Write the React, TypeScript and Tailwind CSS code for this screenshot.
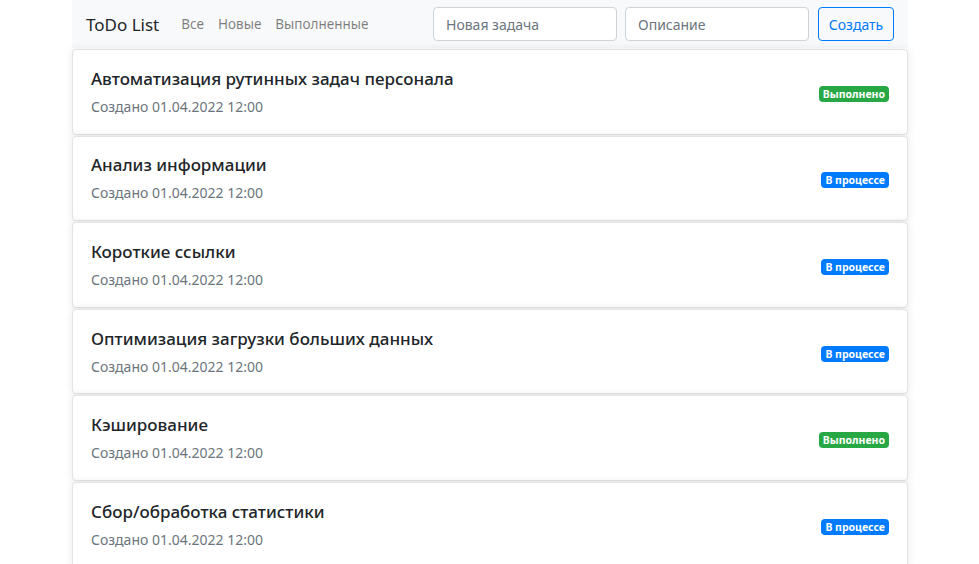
const tasks = [
  { title: "Автоматизация рутинных задач персонала", done: true },
  { title: "Анализ информации", done: false },
  { title: "Короткие ссылки", done: false },
  { title: "Оптимизация загрузки больших данных", done: false },
  { title: "Кэширование", done: true },
  { title: "Сбор/обработка статистики", done: false },
];

function StatusBadge({ done }: { done: boolean }) {
  return done ? (
    <span className="mt-[4px] rounded-[4px] bg-[#28a745] px-[4px] py-[3px] text-[10.5px] font-bold leading-[10px] text-white">
      Выполнено
    </span>
  ) : (
    <span className="mt-[4px] rounded-[4px] bg-[#007bff] px-[4px] py-[3px] text-[10.5px] font-bold leading-[10px] text-white">
      В процессе
    </span>
  );
}

export default function App() {
  return (
    <div className="min-h-screen bg-white font-['Noto_Sans','Open_Sans',sans-serif] text-[#212529]">
      <div className="ml-[72px] w-[836px]">
        <nav className="flex h-[48px] items-center bg-[#f8f9fa] pl-[14px] pr-[14px]">
          <span className="mr-[22px] text-[17px] leading-none text-[#212529]">ToDo List</span>
          <div className="flex gap-[14px] text-[13.5px] text-[rgba(0,0,0,0.5)]">
            <span>Все</span>
            <span>Новые</span>
            <span>Выполненные</span>
          </div>
          <div className="ml-auto flex items-center gap-[8px]">
            <input
              placeholder="Новая задача"
              className="h-[34px] w-[184px] rounded-[4px] border border-[#ced4da] bg-white px-[12px] text-[14px] text-[#495057] placeholder:text-[#6c757d] outline-none"
            />
            <input
              placeholder="Описание"
              className="mr-[1px] h-[34px] w-[184px] rounded-[4px] border border-[#ced4da] bg-white px-[12px] text-[14px] text-[#495057] placeholder:text-[#6c757d] outline-none"
            />
            <button className="h-[34px] w-[76px] rounded-[4px] border border-[#007bff] text-[14px] text-[#007bff]">
              Создать
            </button>
          </div>
        </nav>
        <div className="flex flex-col gap-[1px] pt-[1px]">
          {tasks.map((t) => (
            <div
              key={t.title}
              className="flex h-[85.6px] shrink-0 items-center justify-between rounded-[4px] border border-[#e3e3e3] bg-white px-[18px] shadow-[0_0_10px_rgba(0,0,0,0.09)]"
            >
              <div className="flex flex-col">
                <span className="text-[17px] font-medium leading-[22px] text-[#212529]">{t.title}</span>
                <span className="mt-[8px] text-[14px] leading-[18px] text-[#6c757d]">
                  Создано 01.04.2022 12:00
                </span>
              </div>
              <StatusBadge done={t.done} />
            </div>
          ))}
        </div>
      </div>
    </div>
  );
}
